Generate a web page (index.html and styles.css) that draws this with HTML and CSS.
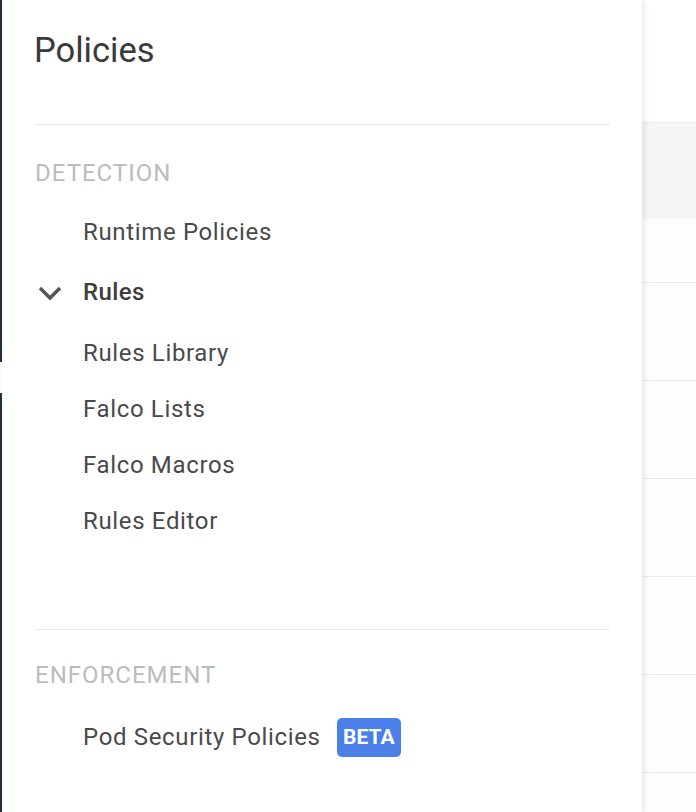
FILE: index.html
```html
<!DOCTYPE html>
<html>
<head>
<meta charset="utf-8">
<link rel="stylesheet" href="styles.css">
</head>
<body>
<div class="page">
  <div class="strip">
    <div class="strip-top"></div>
    <div class="strip-gap"></div>
    <div class="strip-bottom"></div>
  </div>
  <div class="panel">
    <div class="panel-head">
      <h1 class="title">Policies</h1>
    </div>
    <div class="divider"></div>
    <div class="section-label detection">DETECTION</div>
    <ul class="menu">
      <li class="item">Runtime Policies</li>
      <li class="item item-group">
        <span class="chev">
          <svg width="24" height="16" viewBox="0 0 24 16"><polyline points="2,3 12,13 22,3" fill="none" stroke="#555" stroke-width="3.4"/></svg>
        </span>
        <span>Rules</span>
      </li>
    </ul>
    <ul class="menu sub">
      <li class="item sub-item">Rules Library</li>
      <li class="item sub-item">Falco Lists</li>
      <li class="item sub-item">Falco Macros</li>
      <li class="item sub-item">Rules Editor</li>
    </ul>
    <div class="divider divider-2"></div>
    <div class="section-label enforcement">ENFORCEMENT</div>
    <ul class="menu">
      <li class="item pod">Pod Security Policies<span class="badge">BETA</span></li>
    </ul>
  </div>
  <div class="right">
    <div class="r-head"></div>
    <div class="r-band"></div>
    <div class="r-row r-row1"></div>
    <div class="r-row"></div>
    <div class="r-row"></div>
    <div class="r-row"></div>
    <div class="r-row"></div>
    <div class="r-row"></div>
  </div>
</div>
</body>
</html>
```

FILE: styles.css
```css
html, body {
  margin: 0;
  padding: 0;
  height: 100%;
  background: #ffffff;
  font-family: Roboto, "Liberation Sans", Arial, sans-serif;
}
.page {
  display: flex;
  height: 812px;
  overflow: hidden;
}
.strip {
  width: 2px;
  display: flex;
  flex-direction: column;
  flex: none;
}
.strip-top { height: 362px; background: #243142; }
.strip-gap { height: 31px; background: #ffffff; }
.strip-bottom { flex: 1; background: #243142; }

.panel {
  width: 640px;
  flex: none;
  background: #ffffff;
  position: relative;
  z-index: 1;
  box-shadow: 2px 0 6px rgba(0, 0, 0, 0.09);
  padding-left: 33px;
  box-sizing: border-box;
}
.panel-head {
  height: 124px;
  box-sizing: border-box;
  padding-top: 30px;
}
.title {
  margin: 0 0 0 -1px;
  font-size: 34.5px;
  line-height: 40px;
  font-weight: 400;
  color: #3a3a3a;
}
.divider {
  width: 575px;
  height: 1px;
  background: #ebebeb;
}
.section-label {
  height: 48px;
  line-height: 48px;
  font-size: 24px;
  letter-spacing: 1px;
  color: #bcbcbc;
  margin-top: 24px;
}
.enforcement { margin-top: 21px; }
.menu {
  list-style: none;
  margin: 0;
  padding: 0;
}
.detection + .menu { margin-top: 5px; }
.item {
  height: 60px;
  line-height: 60px;
  font-size: 24px;
  letter-spacing: 0.65px;
  color: #4a4a4a;
  padding-left: 48px;
  display: flex;
  align-items: center;
}
.item-group {
  padding-left: 0;
  font-weight: 500;
  letter-spacing: 0.4px;
  color: #3d3d3d;
}
.chev {
  width: 48px;
  display: flex;
  align-items: center;
}
.chev svg { margin-left: 3px; margin-top: 2px; }
.sub { padding-top: 3px; }
.sub-item {
  height: 56px;
  line-height: 56px;
}
.divider-2 { margin-top: 80px; }
.enforcement + .menu { margin-top: 8px; }
.badge {
  display: inline-block;
  margin-left: 16px;
  height: 39px;
  line-height: 39px;
  padding: 0 6.5px;
  background: #4a80e8;
  color: #ffffff;
  font-weight: 700;
  font-size: 21px;
  letter-spacing: 0;
  border-radius: 5px;
}

.right {
  flex: 1;
  background: #fdfdfd;
}
.r-head {
  height: 122px;
  background: #ffffff;
  border-bottom: 1px solid #ebebeb;
}
.r-band {
  height: 96px;
  background: #f5f5f5;
}
.r-row {
  height: 97px;
  border-bottom: 1px solid #ebebeb;
}
.r-row1 { height: 63px; }
```
